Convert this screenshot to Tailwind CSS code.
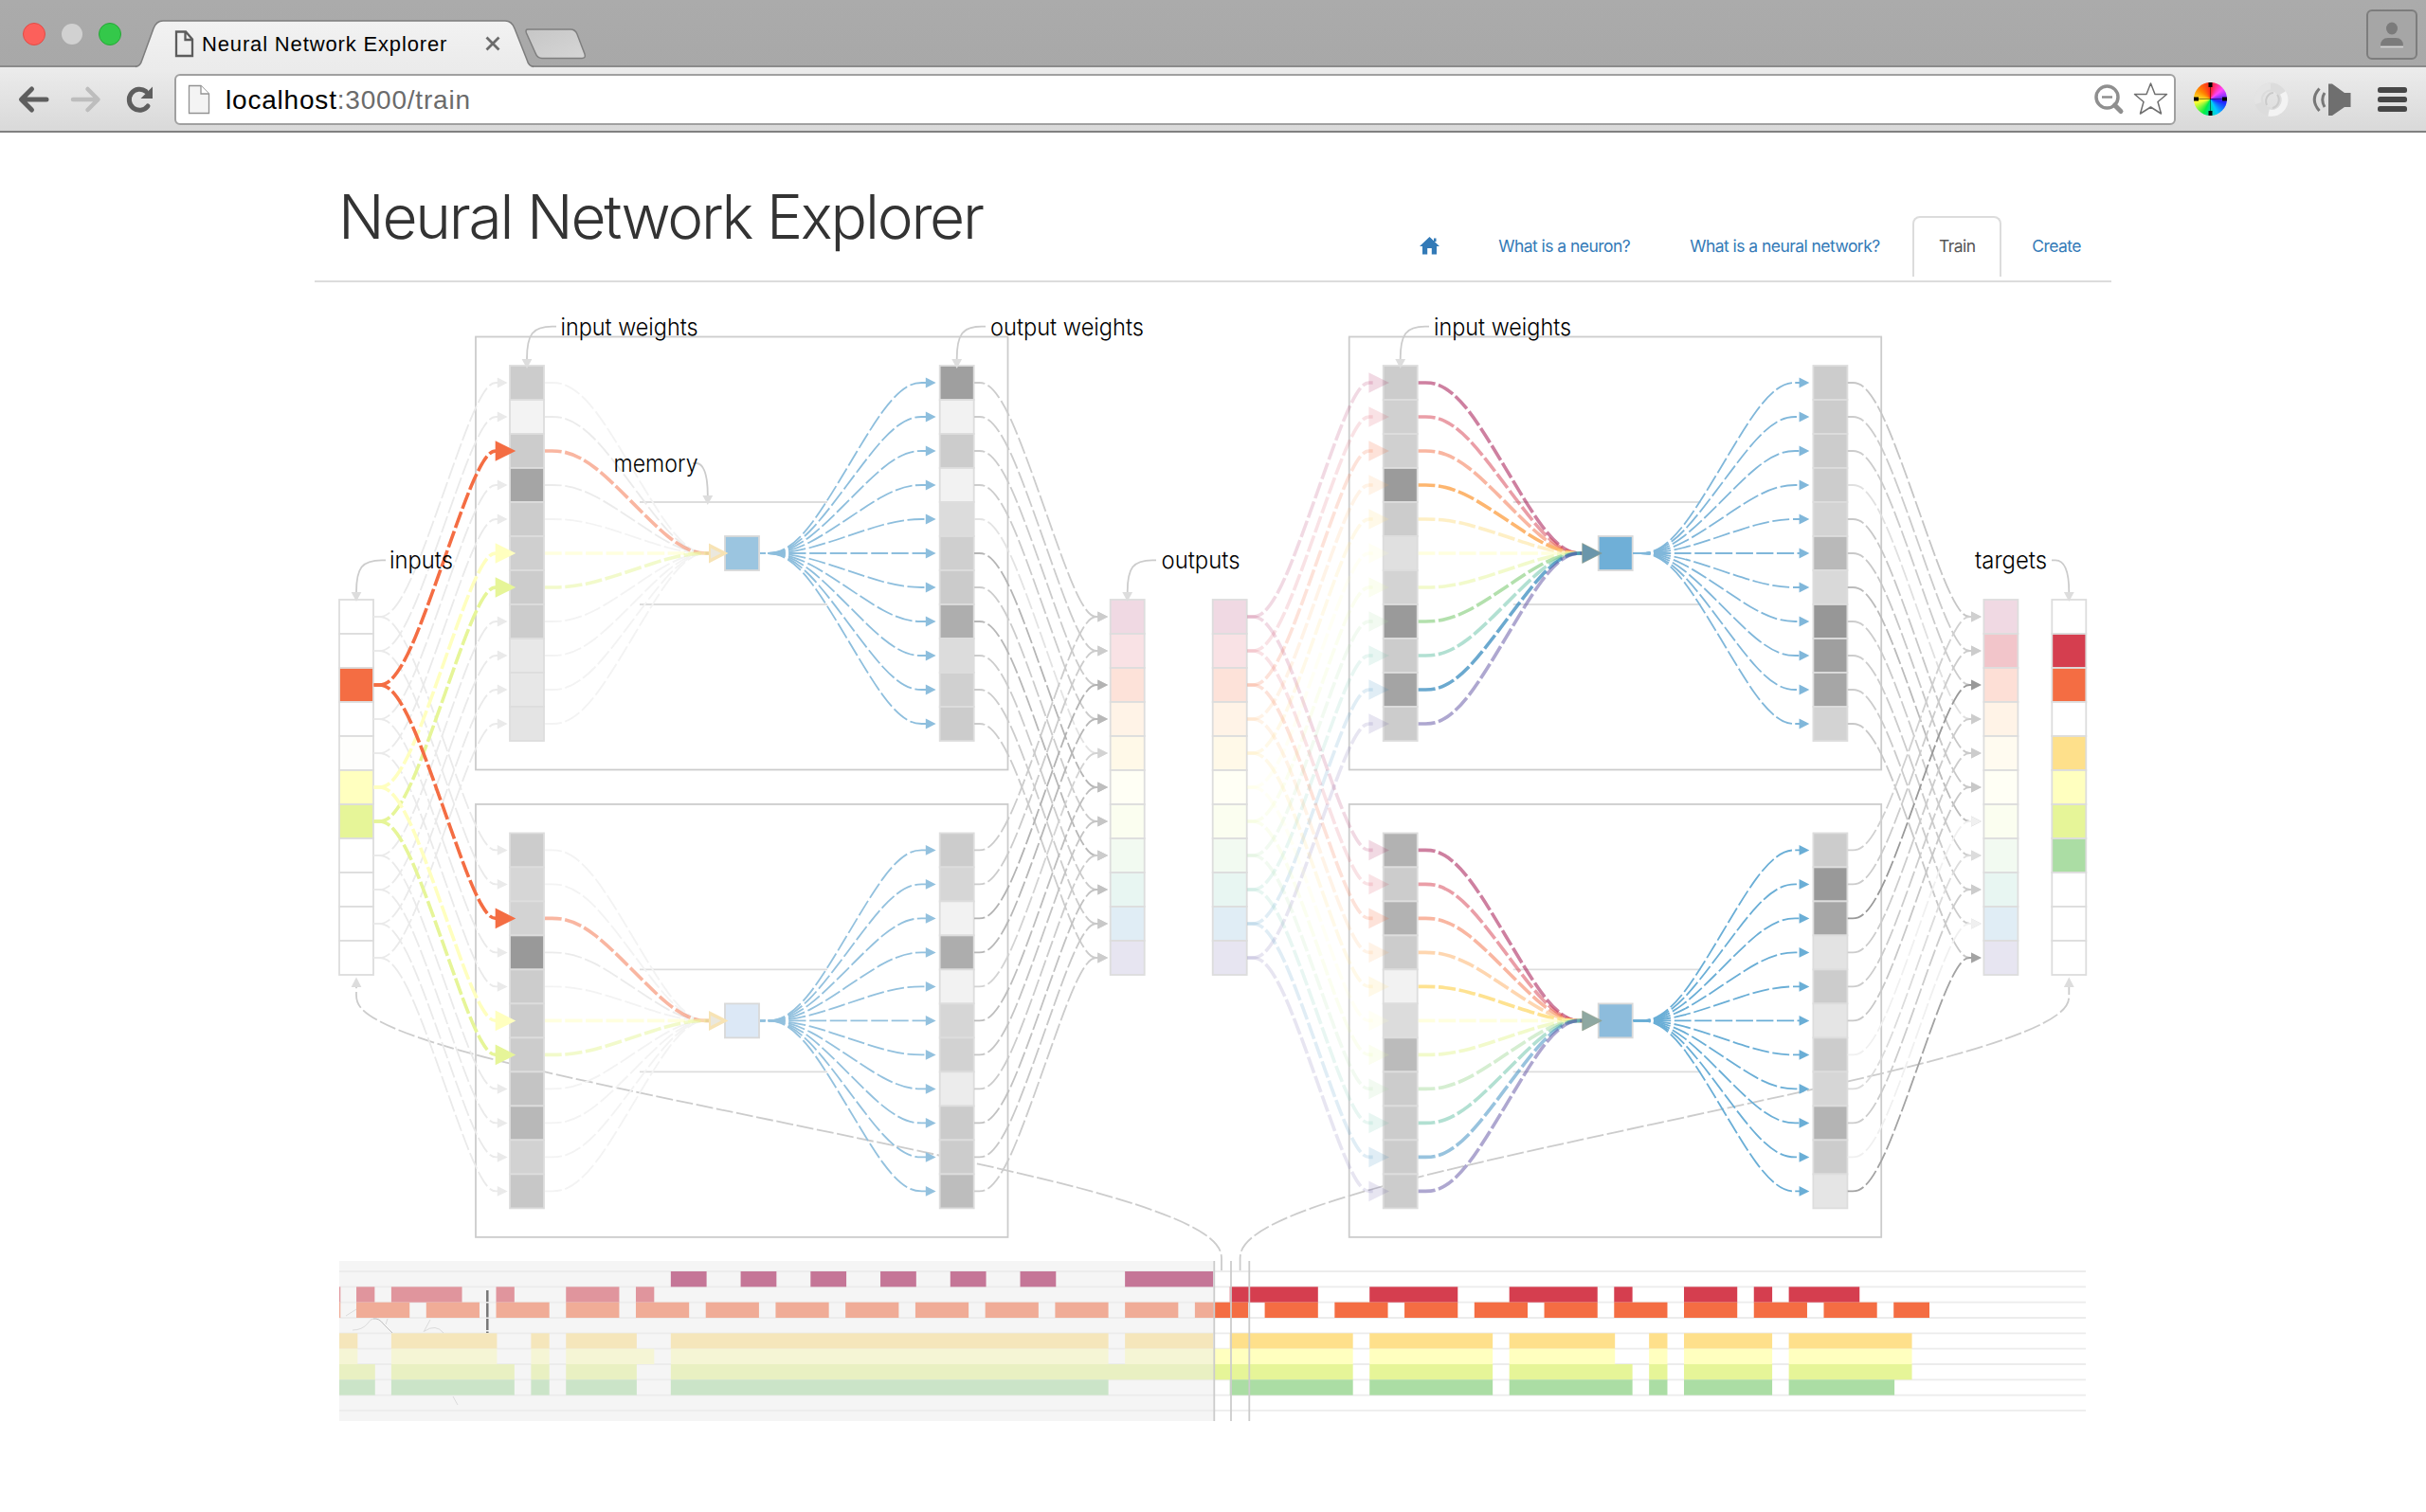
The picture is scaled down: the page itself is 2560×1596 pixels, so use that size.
<!DOCTYPE html>
<html lang="en">
<head>
<meta charset="utf-8">
<title>Neural Network Explorer</title>
<script src="https://cdn.jsdelivr.net/npm/@tailwindcss/browser@4"></script>
</head>
<body class="bg-white w-[2560px] h-[1596px] overflow-hidden font-['Liberation_Sans',sans-serif]">
<div class="flex flex-col h-[1596px]">
  <!-- title bar -->
  <div class="relative h-[71px] shrink-0 bg-gradient-to-b from-[#ababab] to-[#a8a8a8] border-b-2 border-[#8b8b8b] flex">
    <svg class="absolute left-0 top-0" width="700" height="72" viewBox="0 0 700 72">
      <defs><linearGradient id="tab" x1="0" y1="0" x2="0" y2="1"><stop offset="0" stop-color="#f2f2f2"/><stop offset="1" stop-color="#ebebeb"/></linearGradient>
      <linearGradient id="nt" x1="0" y1="0" x2="1" y2="1"><stop offset="0" stop-color="#c6c6c6"/><stop offset="1" stop-color="#d6d6d6"/></linearGradient></defs>
      <circle cx="36" cy="36" r="11.5" fill="#fc605b" stroke="#e24b46"/>
      <circle cx="76" cy="36" r="11" fill="#d1d1d1"/>
      <circle cx="116" cy="36" r="11.5" fill="#34c84a" stroke="#27a737"/>
      <path d="M143 72V70.5Q148 70 150 63L162 30Q165 22 172 22H533Q540 22 543 30L556 63Q558 70 563 70.5V72Z" fill="url(#tab)"/>
      <path d="M143 70.5Q148 70 150 63L162 30Q165 22 172 22H533Q540 22 543 30L556 63Q558 70 563 70.5" fill="none" stroke="#7d7d7d" stroke-width="1.5"/>
      <path d="M557 31H602Q607 31 609 36L617 57Q618.500 61.500 614 61.500H572Q567 61.500 565 56L555.500 35Q554 31 557 31Z" fill="url(#nt)" stroke="#7f7f7f" stroke-width="1.500"/>
      <path d="M186 33.500H196L203 41.500V59H186ZM195.500 34V42H203" fill="none" stroke="#5c5c5c" stroke-width="2.300"/>
      <path d="M513.500 39.500L526.500 52.500M526.500 39.500L513.500 52.500" stroke="#6b6b6b" stroke-width="2.800"/>
    </svg>
    <span class="relative pl-[213px] pt-[33px] text-[22px] leading-[28px] text-black tracking-[0.85px] whitespace-nowrap">Neural Network Explorer</span>
    <svg class="absolute left-[2496px] top-[9px]" width="56" height="56" viewBox="0 0 56 56">
      <rect x="2" y="2" width="52" height="51" rx="5" fill="#a6a6a6" stroke="#7d7d7d" stroke-width="2"/>
      <ellipse cx="28" cy="21" rx="6" ry="6.500" fill="#7b7b7b"/><path d="M16 39.500Q16 31 24 31H32Q40 31 40 39.500Z" fill="#7b7b7b"/><path d="M16 40.500H40" stroke="#d5d5d5" stroke-width="1.500"/>
    </svg>
  </div>
  <!-- toolbar -->
  <div class="h-[69px] shrink-0 bg-gradient-to-b from-[#ececec] to-[#d9d9d9] border-b-2 border-[#808080] flex items-center">
    <svg class="w-[184px] h-[53px] shrink-0" viewBox="0 79 184 53" fill="none" stroke-linecap="round" stroke-linejoin="round">
      <path d="M49 106H24M33.500 95L22.500 106L33.500 117" stroke="#5e5e5e" stroke-width="5"/>
      <path d="M77 106H102M92.500 95L103.500 106L92.500 117" stroke="#bdbdbd" stroke-width="4.500"/>
      <path d="M156 113A11 11 0 1 1 154 97.500" stroke="#5e5e5e" stroke-width="5"/><path d="M161 92.500V105H148.500Z" fill="#5e5e5e"/>
    </svg>
    <div class="w-[2112px] h-[54px] shrink-0 bg-white border-2 border-[#a0a0a0] rounded-[6px] flex items-center">
      <svg class="w-[52px] h-[40px] shrink-0" viewBox="187 85 52 40"><path d="M200.500 90.500H213L221.500 99V119.500H200.500Z" fill="#f4f4f4" stroke="#929292" stroke-width="1.300"/><path d="M213 90.500V99H221.500" fill="#fff" stroke="#929292" stroke-width="1.300"/></svg>
      <span class="text-[28px] leading-[32px] pt-[3px] tracking-[0.8px] text-black whitespace-nowrap grow">localhost<span class="text-[#6b6b6b]">:3000/train</span></span>
      <svg class="w-[90px] h-[40px] shrink-0" viewBox="2204 85.500 90 40" fill="none">
        <circle cx="2223.500" cy="103" r="11.500" stroke="#8f8f8f" stroke-width="3.500"/><path d="M2218 103H2229" stroke="#8f8f8f" stroke-width="2.500"/><path d="M2231.500 111.500L2238 118" stroke="#8f8f8f" stroke-width="5" stroke-linecap="round"/>
        <path d="M2269.500 88.500L2274 100H2286.500L2277 108L2280.500 120.500L2269.500 113.500L2258.500 120.500L2262 108L2252.500 100H2265Z" stroke="#6f6f6f" stroke-width="1.500" stroke-linejoin="round"/>
      </svg>
    </div>
    <div class="flex items-center grow">
      <div class="ml-[19px] relative w-[35px] h-[35px]">
        <div class="w-[35px] h-[35px] rounded-full bg-[conic-gradient(from_0deg,#f22,#f4f,#22f,#0cf,#0e4,#ff3,#f80,#f22)]"></div>
        <svg class="absolute inset-0" width="35" height="35" viewBox="0 0 35 35"><path d="M17.500 0V35M0 17.500H35" stroke="#000" stroke-opacity=".45"/><path d="M17.500 0V5M17.500 30V35M0 17.500H5M30 17.500H35" stroke="#000" stroke-width="4"/></svg>
      </div>
      <svg class="ml-[28px]" width="37" height="38" viewBox="0 0 37 38" fill="none"><circle cx="18.500" cy="19" r="13" stroke="#dcdcdc" stroke-width="9"/><path d="M5 23A14 14 0 0 1 18 5" stroke="#e4e4e4" stroke-width="7"/><path d="M16 33A14 14 0 0 0 31 12" stroke="#f3f3f3" stroke-width="7"/><path d="M21 12A8 9 0 0 0 14 25" stroke="#cacaca" stroke-width="2"/><path d="M25 14A9 9 0 0 1 20 28" stroke="#cccccc" stroke-width="2"/></svg>
      <svg class="ml-[25px]" width="42" height="36" viewBox="2440 87 42 36" fill="none"><path d="M2457 88.500H2461L2474 98H2480.500V113H2474L2461 122H2457Z" fill="#6f6f6f"/><path d="M2453 98Q2448.500 105 2453 113M2447.500 93.500Q2437 105 2447.500 117" stroke="#777" stroke-width="3"/></svg>
      <svg class="ml-[27px]" width="31" height="28" viewBox="0 0 31 28"><rect y="1" width="31" height="6" rx="2.500" fill="#474747"/><rect y="11" width="31" height="6" rx="2.500" fill="#474747"/><rect y="21" width="31" height="6" rx="2.500" fill="#474747"/></svg>
    </div>
  </div>
  <!-- page header -->
  <div class="h-[158px] shrink-0 ml-[332px] w-[1896px] border-b-2 border-[#dcdcdc] flex justify-between items-end font-['Inter',sans-serif]">
    <h1 class="pl-[25px] pb-[22px] text-[64px] leading-[90px] font-light text-[#333] tracking-[-2.2px] whitespace-nowrap">Neural Network Explorer</h1>
    <nav class="flex items-end h-[70px] pr-[32px] text-[17.5px] leading-[26px] text-[#337ab7] tracking-[-0.55px] whitespace-nowrap">
      <svg class="mb-[27px] mr-[62px]" width="21" height="19" viewBox="0 0 21 19"><path d="M10.500 0L21 10H18V18.500H12.800V12H8.200V18.500H3V10H0ZM15 1.500H17.500V5H15Z" fill="#337ab7"/></svg>
      <a class="mb-[23px] w-[202px]">What is a neuron?</a>
      <a class="mb-[23px] w-[235px]">What is a neural network?</a>
      <a class="mb-[4px] h-[64px] w-[94px] border-2 border-b-0 border-[#dcdcdc] rounded-t-[8px] text-[#555] text-center pt-[17px]">Train</a>
      <a class="mb-[23px] ml-[32px]">Create</a>
    </nav>
  </div>
  <svg id="g" class="w-[2560px] h-[1298px] shrink-0" viewBox="0 298 2560 1298" fill="none"></svg>
</div>
<script>
const NS='http://www.w3.org/2000/svg', root=document.getElementById('g');
function el(n,a,t){const e=document.createElementNS(NS,n);for(const k in a)e.setAttribute(k,a[k]);if(t)e.textContent=t;root.appendChild(e);return e}
const S=['#9e0142','#d53e4f','#f46d43','#fdae61','#fee08b','#ffffbf','#e6f598','#abdda4','#66c2a5','#3288bd','#5e4fa2'];
const C=36, DX=921.7, DY=493.4, Y0=404, YI=651;
// cubic B-spline through four control points
function basis(p){const m=(a,b,u,v,w)=>[(a[0]*u+b[0]*v)/w,(a[1]*u+b[1]*v)/w];
  const k=(a,b,c)=>[(a[0]+4*b[0]+c[0])/6,(a[1]+4*b[1]+c[1])/6];
  const [a,b,c,d]=p;
  return 'M'+a+'L'+m(a,b,5,1,6)+'C'+m(a,b,2,1,3)+' '+m(a,b,1,2,3)+' '+k(a,b,c)+'C'+m(b,c,2,1,3)+' '+m(b,c,1,2,3)+' '+k(b,c,d)+'C'+m(c,d,2,1,3)+' '+m(c,d,1,2,3)+' '+m(c,d,1,5,6)+'L'+d;}
function edge(x0,y0,x1,y1,col,o){o=o||{};const w=o.w||1.8,L=x1-x0,s=L<150;
  const d1=s?32:45,d2=s?22:38;
  const g={opacity:o.op||1};
  el('path',{d:basis([[x0,y0],[x0+d1,y0],[x1-d2,y1],[x1,y1]]),stroke:col,'stroke-width':w,'stroke-dasharray':'18 3.6','stroke-dashoffset':o.off||0,...g});
  if(o.head!==false){const b=x1-w*1.2,l=w*6;el('path',{d:`M${b} ${y1-l/2}L${b+l} ${y1}L${b} ${y1+l/2}Z`,fill:o.hc||col,...g});}}
function cells(cx,cy,cols){cols.forEach((c,i)=>el('rect',{x:cx-18,y:cy-18+i*C,width:C,height:C,fill:c,stroke:'#ddd','stroke-width':1.8}))}
const grey=s=>s.split(' ').map(h=>'#'+h+h+h);
const W=[[grey('cc f3 cc a5 cc cf cc cc e8 e7 e4'),grey('9f f2 cc f2 dc cf cb ae dc d0 cc')],
 [grey('cc d6 d3 99 cc cc cc c4 b8 d2 c7'),grey('cc d6 f2 ad f2 d6 d2 ec cb cc bd')],
 [grey('cc d0 d0 9b cc e0 d3 9a cc a4 cc'),grey('cc cc cc cc d3 b9 d9 97 9f a6 d3')],
 [grey('b2 cc b2 cc f2 dc bb cc cc cc cc'),grey('cc 99 a6 e3 cc e5 cc d6 b4 cc e5')]];
const MEM=['#9bc5e0','#dce8f6','#6fafd7','#8dbcdc'], BL=['#8dbedd','#93c1de','#80b7da','#6aaed6'];
const tint=(i,a)=>{const v=parseInt(S[i].slice(1),16);return 'rgb('+[v>>16,v>>8&255,v&255].map(x=>Math.round(255-(255-x)*a))+')'};
const GO=[['#ccc','#ccc','#ccc','#ccc','#e3e3e3','#b5b5b5','#ccc','#b8b8b8','#ccc','#ccc','#ccc'],
 ['#ccc','#ccc','#b3b3b3','#b8b8b8','#d3d3d3','#bebebe','#c5c5c5','#ccc','#c2c2c2','#c8c8c8','#ccc'],
 ['#c6c6c6','#ccc','#ccc','#e0e0e0','#c8c8c8','#c8c8c8','#bbb','#ccc','#ccc','#ccc','#c8c8c8'],
 ['#d0d0d0','#ccc','#999','#ccc','#ccc','#c8c8c8','#f0f0f0','#dcdcdc','#ccc','#f0f0f0','#a3a3a3']];
// feedback curves from the timeline
const fb={stroke:'#ccc','stroke-width':1.8,'stroke-dasharray':'18 3.6'};
el('path',{d:basis([[1289,1342],[1289,1269],[376,1103],[376,1040]]),...fb});
el('path',{d:basis([[1308.600,1342],[1308.600,1269],[2183.300,1103],[2183.300,1040]]),...fb});
for(const x of [376,2183.300])el('path',{d:`M${x-5.400} 1042L${x} 1031.500L${x+5.400} 1042Z`,fill:'#ddd'});
// boxes and cells
for(let n=0;n<2;n++){const ox=n*DX;
 for(let r=0;r<2;r++){const oy=r*DY,k=n*2+r;
  el('rect',{x:502+ox,y:355.500+oy,width:561.5,height:457,stroke:'#ccc','stroke-width':1.8});
  for(const y of [530,638])el('path',{d:`M${675+ox} ${y+oy}H${873+ox}`,stroke:'#ddd','stroke-width':1.8});
  cells(556+ox,Y0+oy,W[k][0]);cells(1009.700+ox,Y0+oy,W[k][1]);
  el('rect',{x:765+ox,y:566+oy,width:C,height:C,fill:MEM[k],stroke:'#d9d9d9','stroke-width':1.8});
 }}
cells(376,YI,['#fff','#fff',S[2],'#fff','#fefefc',S[5],S[6],'#fff','#fff','#fff','#fff']);
cells(1189.700,YI,S.map((c,i)=>tint(i,i==2||i==4?.2:.15)));
cells(376+DX,YI,S.map((c,i)=>tint(i,i==2||i==4?.2:.15)));
cells(1189.700+DX,YI,S.map((c,i)=>tint(i,i==1?.3:i==2?.22:i==4?.13:.15)));
cells(2183.300,YI,['#fff',S[1],S[2],'#fff',S[4],S[5],S[6],S[7],'#fff','#fff','#fff']);
// edges
for(let n=0;n<2;n++){const ox=n*DX;
 for(let pass=0;pass<2;pass++)for(let r=0;r<2;r++)for(let i=0;i<11;i++){
  const on=i==2||i==5||i==6, y0=YI+i*C, y1=Y0+r*DY+i*C;
  if(n==0&&on==(pass==1))edge(394.500,y0,527,y1,on?S[i]:'#eaeaea',{w:on?3.600:1.800});
  if(n==1&&pass==0)edge(394.500+ox,y0,527+ox,y1,S[i],{w:3.600,op:i==2||i==4?.2:.15});
 }
 for(let r=0;r<2;r++){const oy=r*DY,k=n*2+r,my=584+oy;
  for(let i=0;i<11;i++){const y=Y0+oy+i*C,on=i==2||i==5||i==6;
   if(n==0&&!on)edge(575,y,752,my,i==1&&r==0||i==3?'#ebebeb':'#f3f3f3',{head:false});
  }
  for(let i=0;i<11;i++){const y=Y0+oy+i*C,on=i==2||i==5||i==6;
   if(n==0&&on)edge(575,y,752,my,S[i],{w:3.600,op:.5,head:false});
   if(n==1){const o=r==0?(i==3||i==7?.9:i==9?.72:.5):(i==4?.95:.5);edge(575+ox,y,752+ox,my,S[i],{w:3.600,op:o,head:false});}
  }
  const ax=748+ox;
  el('path',{d:`M${ax} ${my-10.500}L${ax+20.500} ${my}L${ax} ${my+10.500}Z`,fill:n==0?'#f7e3b5':(r==0?'#6a96ab':'#8ea8a1'),stroke:n==0?'none':'#8f9b85','stroke-width':.6});
  if(n==0)el('path',{d:`M${ax+2} ${my-5.500}L${ax+13} ${my}L${ax+2} ${my+5.500}Z`,fill:'#ebe8dd'});
  for(let i=0;i<11;i++)edge(802+ox,my,979+ox,Y0+oy+i*C,BL[k],{off:n==0?12.600:0});
 }
 for(let r=0;r<2;r++)for(let i=0;i<11;i++)edge(1028+ox,Y0+r*DY+i*C,1160.500+ox,YI+i*C,GO[n*2+r][i],{off:n==0?6.500:0});
}
// labels
function lab(t,x,w,y){el('text',{x,y,textLength:w,lengthAdjust:'spacingAndGlyphs',fill:'#000','font-family':'Inter, sans-serif','font-weight':350,'font-size':24.500},t)}
function ptr(x0,y0,x,yb){const s=Math.sign(x0-x);el('path',{d:`M${x0} ${y0}H${x0-s*4}C${x+s*6} ${y0} ${x} ${y0+8} ${x} ${yb}`,stroke:'#ccc','stroke-width':1.8});el('path',{d:`M${x-5.400} ${yb}H${x+5.400}L${x} ${yb+10}Z`,fill:'#ddd'})}
ptr(587,344.700,556,379);ptr(1040,344.700,1009.700,379);ptr(1508,344.700,1477.700,379);
ptr(407,591.300,376,625);ptr(1220,591.300,1189.700,625);ptr(2165,591.300,2183.300,625);ptr(731,489,746.800,523);
lab('input weights',591.5,145,353.700);lab('output weights',1045,162,353.700);lab('input weights',1513,145,353.700);
lab('memory',647.500,89,498);lab('inputs',411,67,599.500);lab('outputs',1225.500,83,599.500);lab('targets',2084,76,599.500);
// timeline
const U=18.434,TX=358,RH=16.33,TY=1342;
for(let i=0;i<10;i++)el('path',{d:`M358 ${TY+i*RH}H2201`,stroke:'#ececec','stroke-width':1.8});
const R={0:'19-21 23-25 27-29 31-33 35-37 39-41 45-50',
1:'0-.02 1-2 3-7 9-10 13-16 17-18 51-56 59-64 67-72 73-74 77-80 81-82 83-87',
2:'0-.02 1-4 5-8 9-12 13-16 17-20 21-24 25-28 29-32 33-36 37-40 41-44 45-48 49-52 53-56 57-60 61-64 65-68 69-72 73-76 77-80 81-84 85-88 89-91',
4:'0-1 3-9 11-12 13-17 19-44 45-50 51-58 59-66 67-73 75-76 77-82 83-90',
5:'0-1 3-9 11-12 13-18 19-44 45-58 59-66 67-73 75-76 77-82 83-90',
6:'0-2 3-10 11-12 13-17 19-58 59-66 67-74 75-76 77-82 83-90',
7:'0-2 3-10 11-12 13-17 19-44 51-58 59-66 67-74 75-76 77-82 83-89'};
for(const r in R)for(const s of R[r].split(' ')){const [a,b]=s.split('-').map(Number);
 el('rect',{x:TX+a*U-(a?.4:0),y:TY+r*RH,width:(b-a)*U+.9,height:RH,fill:S[r]})}
el('rect',{x:358,y:1331,width:923,height:169,fill:'#ececec','fill-opacity':.5});
for(const x of [1281.300,1299,1318.300])el('path',{d:`M${x} 1331V1500`,stroke:'#ccc','stroke-width':1.8});
el('path',{d:'M514.300 1362V1407',stroke:'#777','stroke-width':2.500,'stroke-dasharray':'12 1.500 15 1.500'});
el('path',{d:'M365 1389L376 1382M372 1404Q382 1404 388 1397Q391 1392 394 1392M407 1398L409 1392M447 1406L454 1393M448 1405Q460 1397 468 1407M478 1474L483 1483',stroke:'#aaa','stroke-opacity':.35,'stroke-width':1});
el('path',{d:'M394 1392Q400 1391 405 1398L414 1407',stroke:'#999','stroke-opacity':.6,'stroke-width':1});
</script>
</body>
</html>
